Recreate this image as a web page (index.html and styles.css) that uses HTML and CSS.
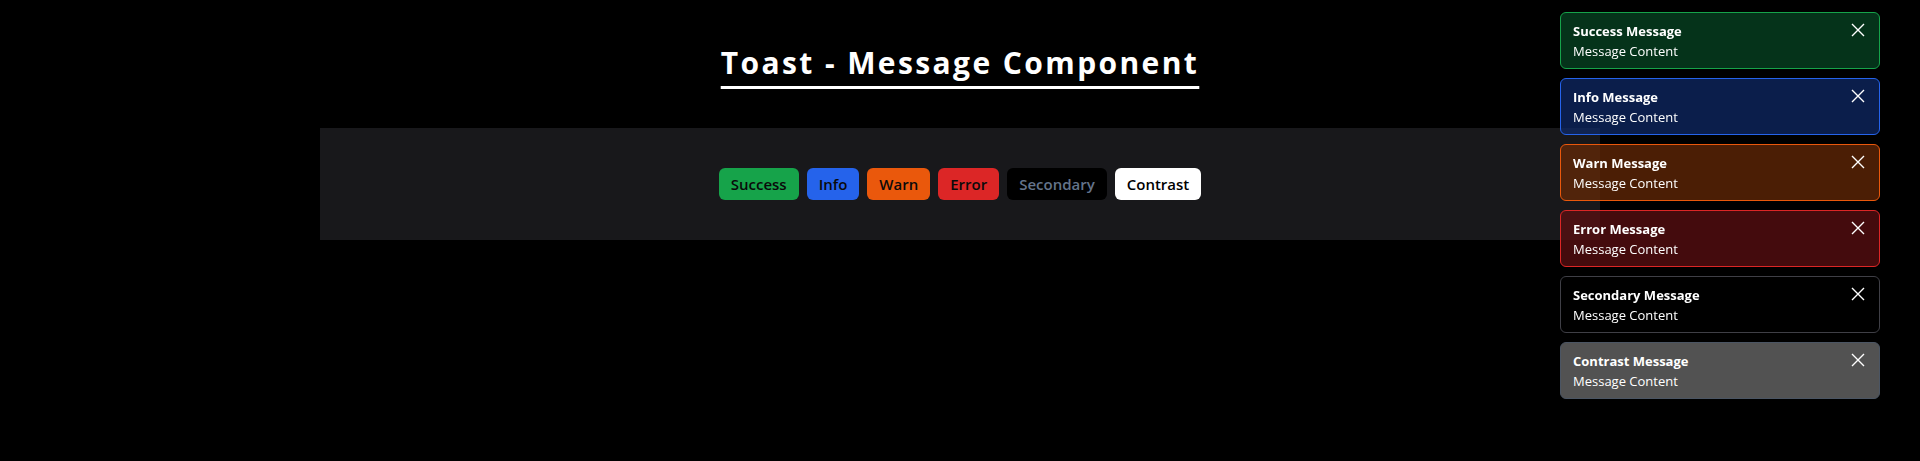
FILE: index.html
```html
<!DOCTYPE html>
<html lang="en">
<head>
<meta charset="utf-8">
<title>Toast - Message Component</title>
<link rel="stylesheet" href="styles.css">
</head>
<body>
<main class="page">
  <h1 class="title">Toast - Message Component</h1>
  <section class="panel">
    <div class="buttons">
      <button class="btn btn-success">Success</button>
      <button class="btn btn-info">Info</button>
      <button class="btn btn-warn">Warn</button>
      <button class="btn btn-error">Error</button>
      <button class="btn btn-secondary">Secondary</button>
      <button class="btn btn-contrast">Contrast</button>
    </div>
  </section>
</main>

<div class="toasts">
  <div class="toast toast-success">
    <div class="toast-body"><div class="toast-title">Success Message</div><div class="toast-text">Message Content</div></div>
    <button class="toast-close"><svg viewBox="0 0 14 14" width="14" height="14"><path d="M1 1L13 13M13 1L1 13" stroke="currentColor" stroke-width="1.4" fill="none"/></svg></button>
  </div>
  <div class="toast toast-info">
    <div class="toast-body"><div class="toast-title">Info Message</div><div class="toast-text">Message Content</div></div>
    <button class="toast-close"><svg viewBox="0 0 14 14" width="14" height="14"><path d="M1 1L13 13M13 1L1 13" stroke="currentColor" stroke-width="1.4" fill="none"/></svg></button>
  </div>
  <div class="toast toast-warn">
    <div class="toast-body"><div class="toast-title">Warn Message</div><div class="toast-text">Message Content</div></div>
    <button class="toast-close"><svg viewBox="0 0 14 14" width="14" height="14"><path d="M1 1L13 13M13 1L1 13" stroke="currentColor" stroke-width="1.4" fill="none"/></svg></button>
  </div>
  <div class="toast toast-error">
    <div class="toast-body"><div class="toast-title">Error Message</div><div class="toast-text">Message Content</div></div>
    <button class="toast-close"><svg viewBox="0 0 14 14" width="14" height="14"><path d="M1 1L13 13M13 1L1 13" stroke="currentColor" stroke-width="1.4" fill="none"/></svg></button>
  </div>
  <div class="toast toast-secondary">
    <div class="toast-body"><div class="toast-title">Secondary Message</div><div class="toast-text">Message Content</div></div>
    <button class="toast-close"><svg viewBox="0 0 14 14" width="14" height="14"><path d="M1 1L13 13M13 1L1 13" stroke="currentColor" stroke-width="1.4" fill="none"/></svg></button>
  </div>
  <div class="toast toast-contrast">
    <div class="toast-body"><div class="toast-title">Contrast Message</div><div class="toast-text">Message Content</div></div>
    <button class="toast-close"><svg viewBox="0 0 14 14" width="14" height="14"><path d="M1 1L13 13M13 1L1 13" stroke="currentColor" stroke-width="1.4" fill="none"/></svg></button>
  </div>
</div>
</body>
</html>
```

FILE: styles.css
```css
* { box-sizing: border-box; }

html, body {
  margin: 0;
  padding: 0;
  background: #000;
  color: #fff;
  font-family: "Open Sans", "Noto Sans", "Liberation Sans", sans-serif;
}

.page {
  max-width: 1280px;
  margin: 0 auto;
  padding-top: 43px;
}

.title {
  margin: 0 0 45px;
  text-align: center;
  font-size: 30px;
  line-height: 40px;
  font-weight: 700;
  letter-spacing: 2.4px;
  text-decoration: underline;
  text-decoration-thickness: 3px;
  text-underline-offset: 12px;
}

.panel {
  background: #18181b;
  height: 112px;
  display: flex;
  align-items: center;
  justify-content: center;
}

.buttons {
  display: flex;
  gap: 8px;
}

.btn {
  height: 32px;
  padding: 0 12px;
  border: none;
  border-radius: 6px;
  font-family: inherit;
  font-size: 15px;
  font-weight: 600;
  color: #0a0a0a;
  cursor: pointer;
}

.btn-success { background: #16a34a; }
.btn-info { background: #2563eb; }
.btn-warn { background: #ea580c; }
.btn-error { background: #dc2626; }
.btn-secondary { background: #000; color: #64748b; }
.btn-contrast { background: #fff; color: #000; }

.toasts {
  position: fixed;
  top: 12px;
  right: 40px;
  width: 320px;
  display: flex;
  flex-direction: column;
  gap: 9px;
}

.toast {
  display: flex;
  align-items: flex-start;
  justify-content: space-between;
  height: 57px;
  padding: 8px 14px 8px 12px;
  border: 1px solid;
  border-radius: 6px;
  color: #fff;
}

.toast-title {
  font-size: 13px;
  line-height: 20px;
  font-weight: 700;
}

.toast-text {
  font-size: 13px;
  line-height: 20px;
}

.toast-close {
  background: none;
  border: none;
  padding: 0;
  margin-top: 2px;
  color: #fff;
  display: flex;
}

.toast-success { background: rgba(7, 68, 35, 0.75); border-color: #16a34a; }
.toast-info { background: rgba(15, 40, 100, 0.75); border-color: #2563eb; }
.toast-warn { background: rgba(100, 40, 7, 0.75); border-color: #ea580c; }
.toast-error { background: rgba(91, 15, 17, 0.75); border-color: #dc2626; }
.toast-secondary { background: rgba(0, 0, 0, 0.75); border-color: #3f3f46; }
.toast-contrast { background: #525252; border-color: #4b5563; }
```
